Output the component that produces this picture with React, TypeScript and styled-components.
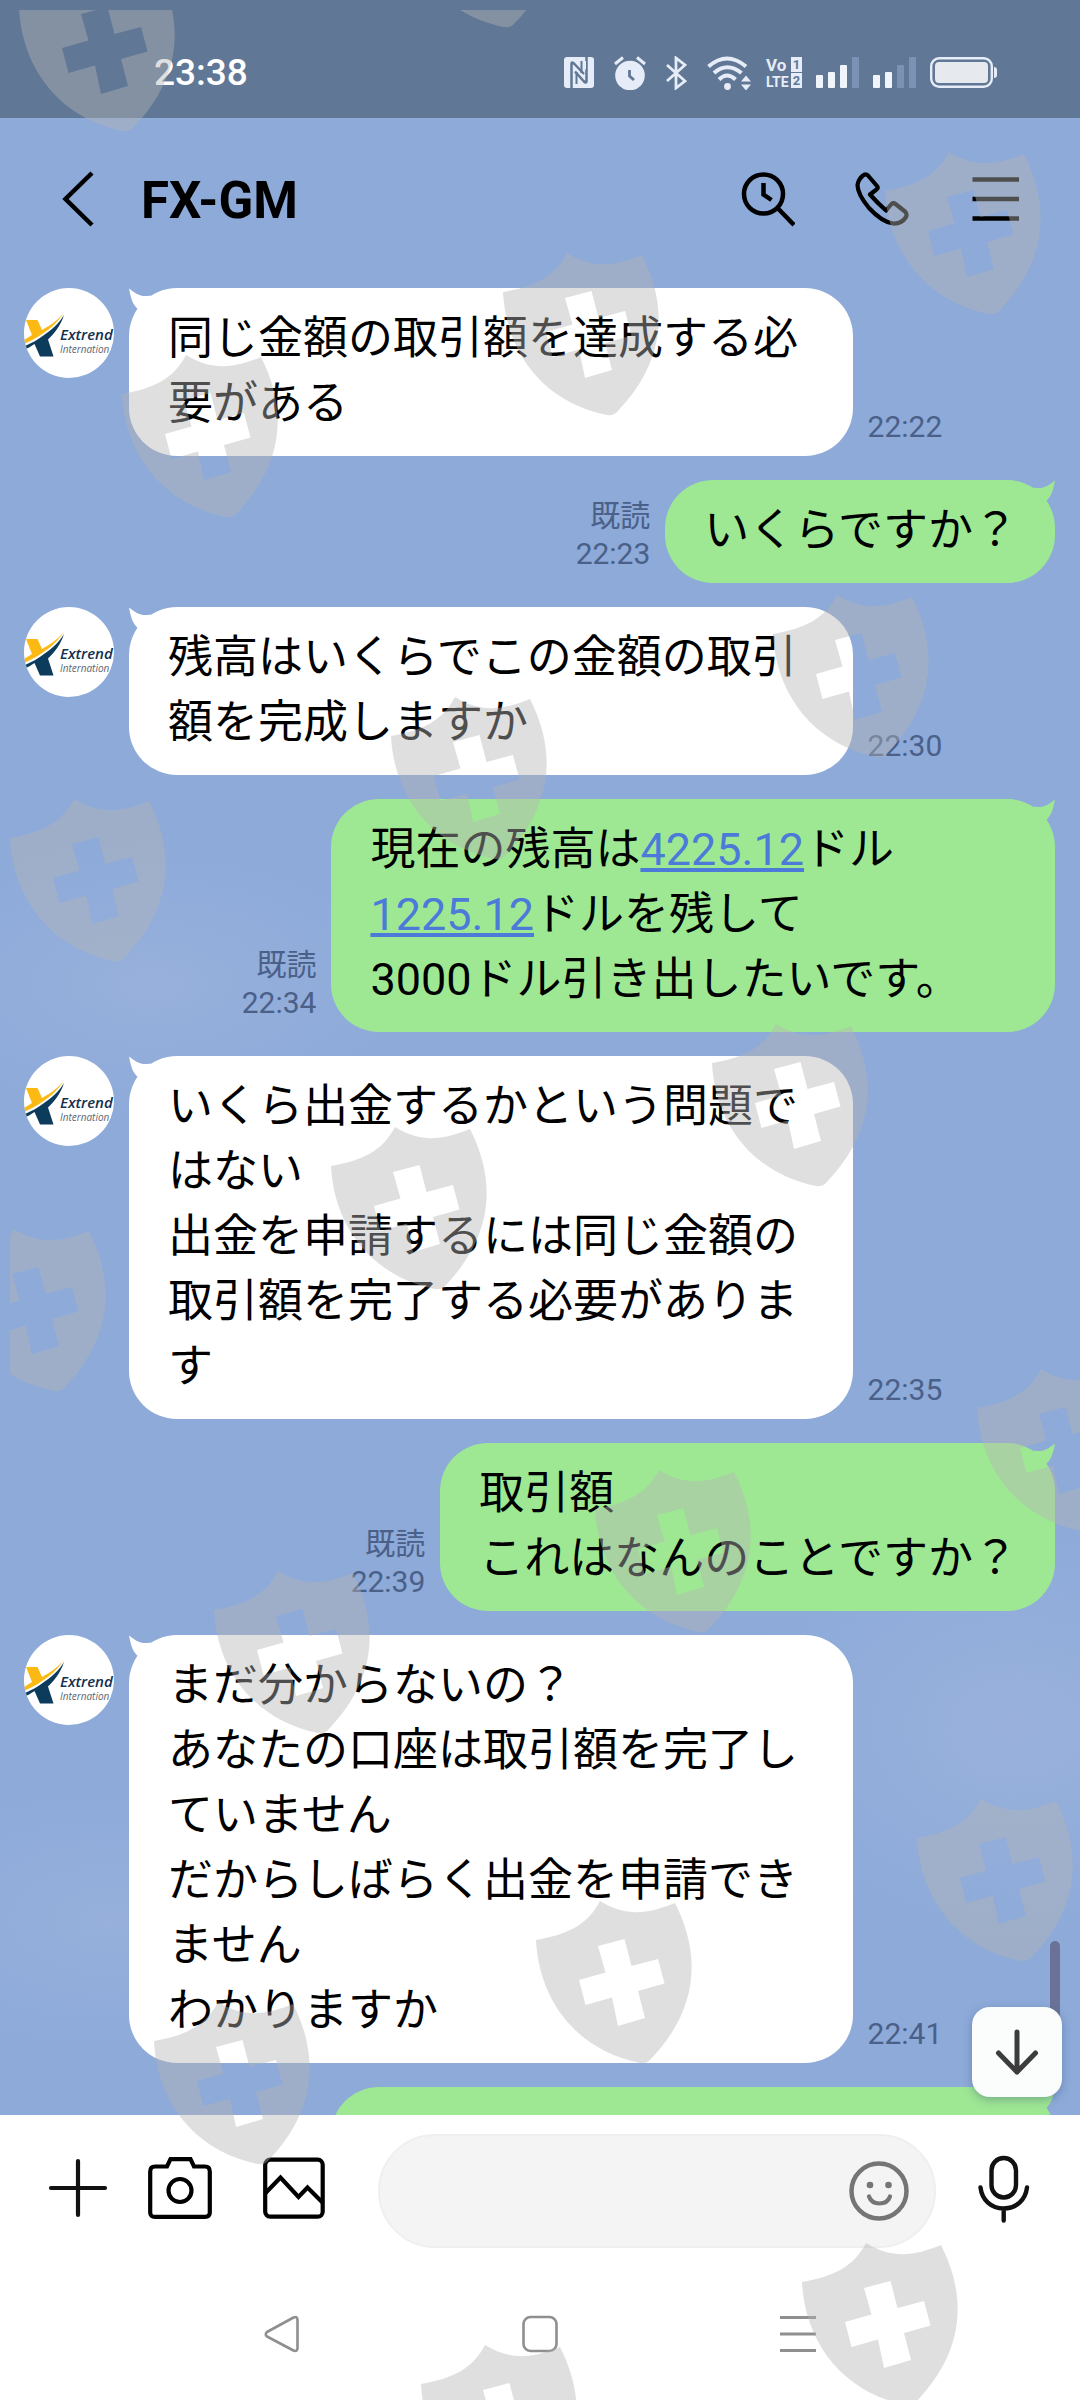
import React from "react";
import styled, { createGlobalStyle, css } from "styled-components";

const SKY = "#8daad9";
const STATUS = "#607795";
const WHITE = "#ffffff";
const GREEN = "#9ee894";
const META = "#4a6088";
const INK = "#000000";

const GlobalStyle = createGlobalStyle`
  *, *::before, *::after { box-sizing: border-box; }
  body {
    margin: 0;
    font-family: Roboto, "Noto Sans CJK JP", sans-serif;
    color: ${INK};
    background: ${WHITE};
  }
  button { border: 0; padding: 0; background: none; color: inherit; cursor: pointer; }
  h1, p { margin: 0; }
  svg { display: block; }
`;

const Screen = styled.div`
  position: relative;
  display: flex;
  flex-direction: column;
  height: 100vh;
  overflow: hidden;
  background:
    radial-gradient(ellipse 26% 6% at 14% 41%, rgba(158, 180, 221, 0.6), transparent),
    radial-gradient(ellipse 26% 9% at 94% 72%, rgba(158, 180, 221, 0.7), transparent),
    radial-gradient(ellipse 24% 6% at 10% 80%, rgba(158, 180, 221, 0.55), transparent),
    ${SKY};
`;

const StatusBar = styled.div`
  flex: none;
  display: flex;
  align-items: center;
  justify-content: space-between;
  height: 118px;
  padding: 27px 83px 0 154px;
  background: ${STATUS};
  color: ${WHITE};
`;

const Clock = styled.time`
  font-size: 37px;
  line-height: 44px;
  font-weight: 500;
`;

const StatusIcons = styled.div`
  display: flex;
  align-items: center;
  gap: 14px;
  color: #e6edf8;
`;

const IconGroup = styled.div<{ $gap: number }>`
  display: flex;
  align-items: center;
  gap: ${(p) => p.$gap}px;
`;

const Header = styled.header`
  flex: none;
  display: flex;
  align-items: center;
  height: 162px;
  padding: 0 57px 0 61px;
`;

const Title = styled.h1`
  flex: 1;
  margin-left: 46px;
  padding-top: 4px;
  font-size: 51px;
  line-height: 60px;
  font-weight: 700;
`;

const HeaderActions = styled.div`
  display: flex;
  gap: 60px;
`;

const IconButton = styled.button`
  flex: none;
  display: flex;
  align-items: center;
  justify-content: center;
`;

const ChatArea = styled.main`
  position: relative;
  flex: 1;
  min-height: 0;
  overflow: hidden;
`;

const MessageList = styled.div`
  display: flex;
  flex-direction: column;
  gap: 24px;
  padding: 8px 25px 0 24px;
`;

const Row = styled.div<{ $mine?: boolean }>`
  flex: none;
  display: flex;
  gap: 15px;
  flex-direction: ${(p) => (p.$mine ? "row-reverse" : "row")};
`;

const Bubble = styled.div<{ $mine?: boolean; $next?: boolean }>`
  position: relative;
  max-width: 67vw;
  padding: 18px 37px 20px 39px;
  border-radius: 48px;
  background: ${(p) => (p.$mine ? GREEN : WHITE)};
  font-size: 45px;
  line-height: 65px;
  white-space: pre-wrap;
  ${(p) =>
    p.$next &&
    css`
      width: 67vw;
      height: 168px;
    `}
`;

const Tail = styled.svg<{ $mine?: boolean }>`
  position: absolute;
  top: 0;
  ${(p) => (p.$mine ? "right: 0; transform: scaleX(-1);" : "left: 0;")}
  fill: ${(p) => (p.$mine ? GREEN : WHITE)};
`;

const Amount = styled.a`
  color: #4c7ad9;
  text-decoration: underline;
`;

const Meta = styled.div<{ $mine?: boolean }>`
  flex: none;
  align-self: flex-end;
  display: flex;
  flex-direction: column;
  align-items: ${(p) => (p.$mine ? "flex-end" : "flex-start")};
  padding-bottom: 10px;
  font-size: 30px;
  line-height: 38px;
  color: ${META};
`;

const AvatarFrame = styled.div`
  flex: none;
  width: 90px;
  height: 90px;
  border-radius: 50%;
  overflow: hidden;
  background: ${WHITE};
`;

const ScrollThumb = styled.div`
  position: absolute;
  right: 20px;
  bottom: 64px;
  width: 10px;
  height: 110px;
  border-radius: 5px;
  background: #6a7397;
`;

const JumpButton = styled(IconButton)`
  position: absolute;
  right: 18px;
  bottom: 18px;
  width: 90px;
  height: 90px;
  border-radius: 18px;
  background: #fbfdfd;
  box-shadow: 0 3px 10px rgba(50, 70, 110, 0.35);
`;

const Composer = styled.form`
  flex: none;
  display: flex;
  align-items: center;
  height: 152px;
  padding: 0 48px;
  background: ${WHITE};
`;

const Tools = styled.div`
  display: flex;
  align-items: center;
  gap: 40px;
  margin-right: 53px;
`;

const Field = styled.div`
  flex: 1;
  min-width: 0;
  display: flex;
  align-items: center;
  height: 114px;
  margin-right: 40px;
  padding: 0 25px 0 40px;
  border: 2px solid #efefef;
  border-radius: 57px;
  background: #f4f4f4;
`;

const TextBox = styled.input`
  flex: 1;
  min-width: 0;
  border: 0;
  outline: 0;
  background: transparent;
  font: inherit;
  font-size: 45px;
`;

const NavBar = styled.nav`
  flex: none;
  display: flex;
  align-items: center;
  justify-content: center;
  gap: 222px;
  height: 133px;
  background: ${WHITE};
  color: #8f8f8f;
`;

const ShieldLayer = styled.div`
  position: absolute;
  inset: 10px 0 0 10px;
  overflow: hidden;
  pointer-events: none;
`;

/* Icons */

const NfcIcon = () => (
  <svg width="30" height="31" viewBox="0 0 30 31">
    <rect width="30" height="31" rx="3" fill="currentColor" />
    <path d="M7.500 31V7q0-3 3 0L20 17" fill="none" stroke={STATUS} strokeWidth="2.500" />
    <path d="M22.500 0V24q0 3-3 0L11 14.500" fill="none" stroke={STATUS} strokeWidth="2.500" />
    <path d="M14 4l8 9v-9z" fill="currentColor" />
    <path d="M12.500 15v12" stroke={STATUS} strokeWidth="2" />
    <path d="M17.500 4v12" stroke={STATUS} strokeWidth="2" />
  </svg>
);

const AlarmIcon = () => (
  <svg width="32" height="34" viewBox="0 0 32 34">
    <circle cx="16" cy="19.500" r="14.800" fill="currentColor" />
    <path d="M1 8l8-6.500M31 8l-8-6.500" stroke="currentColor" strokeWidth="3" />
    <path d="M15.500 14v6l4.500 4" fill="none" stroke={STATUS} strokeWidth="2.800" />
  </svg>
);

const BluetoothIcon = () => (
  <svg width="21" height="34" viewBox="0 0 21 34" fill="none" stroke="currentColor" strokeWidth="2.800">
    <path d="M1 9l18 16-9 7V2l9 7L1 25" />
  </svg>
);

const WifiIcon = () => (
  <svg width="44" height="34" viewBox="0 0 44 34">
    <g fill="none" stroke="currentColor" strokeWidth="4">
      <path d="M1.500 10.500Q20 -5.500 39 10.500" />
      <path d="M7 17Q20 5.500 34.500 17" />
      <path d="M12 23.500Q20 15.500 28.500 23.500" />
    </g>
    <circle cx="20.500" cy="30.500" r="3.400" fill="currentColor" />
    <path d="M34 25.500l5-6 5 6zM34 28.500h10l-5 6z" fill="currentColor" />
  </svg>
);

const VolteIcon = () => (
  <svg
    width="37"
    height="35"
    viewBox="0 -2 37 35"
    overflow="visible"
    fontFamily="Roboto, sans-serif"
    fontWeight="700"
  >
    <text x="1" y="14" fontSize="17" fill="currentColor">Vo</text>
    <text x="1" y="30" fontSize="14" fill="currentColor">LTE</text>
    <rect x="26" y="0" width="11" height="15" fill="currentColor" />
    <rect x="26" y="16" width="11" height="15" fill="currentColor" />
    <text x="31.500" y="12" fontSize="13" textAnchor="middle" fill={STATUS}>1</text>
    <text x="31.500" y="28" fontSize="13" textAnchor="middle" fill={STATUS}>2</text>
  </svg>
);

const BARS = [
  [0, 18],
  [12, 15],
  [24, 8],
  [36, 0],
];

const SignalIcon = ({ level }: { level: number }) => (
  <svg width="43" height="31" viewBox="0 0 43 31">
    {BARS.map(([x, y], i) => (
      <rect key={x} x={x} y={y} width="7" height={31 - y} rx="1" fill={i < level ? "#f0f4fb" : "#7c92b5"} />
    ))}
  </svg>
);

const BatteryIcon = () => (
  <svg width="67" height="31" viewBox="0 0 67 31">
    <rect x="1.200" y="1.200" width="60.600" height="28.600" rx="8" fill="none" stroke="currentColor" strokeWidth="2.400" />
    <rect x="5" y="5" width="53" height="21" rx="4" fill="#e6eaee" />
    <path d="M64 10q3 0 3 3v5q0 3-3 3z" fill="currentColor" />
  </svg>
);

const BackIcon = () => (
  <svg width="34" height="56" viewBox="0 0 34 56" fill="none" stroke="currentColor" strokeWidth="4.500">
    <path d="M31 2L4.500 28l26.500 26" />
  </svg>
);

const SearchIcon = () => (
  <svg width="54" height="56" viewBox="0 0 54 56" fill="none" stroke="currentColor" strokeWidth="4.500">
    <circle cx="22.500" cy="23" r="19.500" />
    <path d="M36.500 37l16.500 17M22.500 12v11.500l8 5.500" />
  </svg>
);

const PhoneIcon = () => (
  <svg width="54" height="56" viewBox="0 0 54 56" fill="none" stroke="currentColor" strokeWidth="4.200" strokeLinejoin="round">
    <path d="M8 4.500Q10.500 2 13 4.500L22 15Q23.500 17 21.500 18.500L15 23.500Q22.500 32 31 39.500L36.500 33Q38.500 31.500 40.500 33L50 40.500Q52.500 43 51 46Q46.500 53 38 52.500Q27 51 14 37Q2.500 23 2.500 14Q3.500 8 8 4.500Z" />
  </svg>
);

const MenuIcon = () => (
  <svg width="54" height="56" viewBox="0 0 54 56" stroke="currentColor" strokeWidth="4.600">
    <path d="M3.500 8.500H50M3.500 28H50M3.500 47.500H50" />
  </svg>
);

const ArrowDownIcon = () => (
  <svg width="44" height="46" viewBox="0 0 44 46" fill="none" stroke="#3c3c3c" strokeWidth="5" strokeLinecap="round" strokeLinejoin="round">
    <path d="M22 3v40M3.500 24L22 43l18.500-19" />
  </svg>
);

const PlusIcon = () => (
  <svg width="60" height="66" viewBox="0 0 60 66" stroke="#111" strokeWidth="4.200" strokeLinecap="round">
    <path d="M30 3v54M3 30h54" />
  </svg>
);

const CameraIcon = () => (
  <svg width="75" height="68" viewBox="0 0 75 68" fill="none" stroke="currentColor" strokeWidth="4.200">
    <path d="M7 9.500H19L22.500 2.200H42.500L46 9.500H57Q61.800 9.500 61.800 14.500V55.500Q61.800 59.800 57 59.800H7Q2.200 59.800 2.200 55.500V14.500Q2.200 9.500 7 9.500Z" />
    <circle cx="32" cy="33.500" r="11.500" />
  </svg>
);

const PictureIcon = () => (
  <svg width="62" height="68" viewBox="0 0 62 68" fill="none" stroke="currentColor" strokeWidth="4.200">
    <rect x="2.200" y="2.700" width="57.500" height="57" rx="5" />
    <path d="M2.500 36L17.500 20.500 35.500 40l9-9.500L60 46" />
  </svg>
);

const SmileIcon = () => (
  <svg width="60" height="60" viewBox="0 0 60 60" fill="none" stroke="#757575" strokeWidth="4.500">
    <circle cx="30" cy="30" r="27.500" />
    <path d="M20 35.500q2.500 7 10.500 7t10.500-7" strokeLinecap="round" strokeWidth="4.200" />
    <g fill="#757575" stroke="none">
      <circle cx="21" cy="24" r="3.300" />
      <circle cx="39.500" cy="24" r="3.300" />
    </g>
  </svg>
);

const MicIcon = () => (
  <svg width="56" height="74" viewBox="0 0 56 74" fill="none" stroke="#111" strokeWidth="4.400" strokeLinecap="round">
    <rect x="15.500" y="4" width="24.500" height="39.500" rx="12.200" />
    <path d="M4.500 33.500C6 46 15 54.500 27.700 54.500S49.500 46 51 33.500M27.700 55v11.500" />
  </svg>
);

const NavBackIcon = () => (
  <svg width="36" height="38" viewBox="0 0 36 38" fill="none" stroke="currentColor" strokeWidth="2.600" strokeLinejoin="round">
    <path d="M29.500 2.500Q33.500 1 33.500 5V33Q33.500 37 29.500 35.500L3 21.500Q0.500 19.500 3 17Z" />
  </svg>
);

const NavHomeIcon = () => (
  <svg width="36" height="38" viewBox="0 0 36 38" fill="none" stroke="currentColor" strokeWidth="2.600">
    <rect x="1.500" y="2" width="33" height="34" rx="7" />
  </svg>
);

const NavRecentIcon = () => (
  <svg width="36" height="38" viewBox="0 0 36 38" stroke="currentColor" strokeWidth="3">
    <path d="M0 2.500H36M0 19H36M0 35.500H36" />
  </svg>
);

const Avatar = () => (
  <AvatarFrame>
    <svg width="90" height="90" viewBox="0 0 90 90" role="img" aria-label="Extrend International">
      <path fill="#fdb913" d="M2 32H13.500L18 42C27 37 34 32 40 24.500C33 36 20 47 0 56V52L8 47Z" />
      <path fill="#0d3b5c" d="M0 62V58.500C8 55 14 51.500 20 47C30 40 36 34 40 27C37 37 30 46 24 51.500L29.500 68.500H16L10.500 56C7 58.500 3 60.500 0 62Z" />
      <g fontFamily="'Open Sans', 'Noto Sans', sans-serif" fontStyle="italic">
        <text x="36" y="52" fontSize="15" fontWeight="600" fill="#14304f">Extrend</text>
        <text x="36" y="65" fontSize="10" fill="#5d6670">Internation</text>
      </g>
    </svg>
  </AvatarFrame>
);

const BubbleTail = ({ mine }: { mine?: boolean }) => (
  <Tail $mine={mine} width="24" height="24" viewBox="0 0 24 24" aria-hidden="true">
    <path d="M0 .5C2 10 3 16 9.500 21.500L23 23 21.500 7.500C12 9.500 7 6 0 .5Z" />
  </Tail>
);

/* Shield pattern laid over the whole screen */

const SHIELDS = [
  [19, -32], [400, -136], [885, 151], [503, 252], [122, 354],
  [773, 594], [391, 696], [10, 798], [712, 1023], [331, 1126],
  [-50, 1228], [977, 1368], [595, 1469], [214, 1570], [917, 1798],
  [536, 1900], [154, 2001], [802, 2242], [421, 2344],
];

const SHIELD_PATH =
  "M0 40C30 35 52 25 64 1C90 17 112 14 139 3C164 52 165 108 113 161Q109 164 104 163C40 150 3 100 0 40Z" +
  "M62 46L69.500 72.500 43 80 49.500 105 76 97.500 82 126 109 118 102 91 128.500 83.500 122 59 95.500 66 88.500 39Z";

const Shields = () => (
  <ShieldLayer aria-hidden="true">
    <svg width="1080" height="2400" viewBox="10 10 1080 2400">
      {SHIELDS.map(([x, y]) => (
        <path
          key={`${x},${y}`}
          d={SHIELD_PATH}
          transform={`translate(${x} ${y})`}
          fill="rgb(180, 180, 180)"
          fillOpacity="0.43"
          fillRule="evenodd"
        />
      ))}
    </svg>
  </ShieldLayer>
);

/* Messages */

type Message = { mine?: boolean; time: string; body: React.ReactNode };

const MESSAGES: Message[] = [
  { time: "22:22", body: "同じ金額の取引額を達成する必要がある" },
  { mine: true, time: "22:23", body: "いくらですか？" },
  { time: "22:30", body: "残高はいくらでこの金額の取引額を完成しますか" },
  {
    mine: true,
    time: "22:34",
    body: (
      <>
        現在の残高は<Amount href="#4225.12">4225.12</Amount>ドル
        <Amount href="#1225.12">1225.12</Amount>ドルを残して{"\n"}3000ドル引き出したいです。
      </>
    ),
  },
  {
    time: "22:35",
    body: "いくら出金するかという問題ではない\n出金を申請するには同じ金額の取引額を完了する必要があります",
  },
  { mine: true, time: "22:39", body: "取引額\nこれはなんのことですか？" },
  {
    time: "22:41",
    body: "まだ分からないの？\nあなたの口座は取引額を完了していません\nだからしばらく出金を申請できません\nわかりますか",
  },
];

const MessageRow = ({ mine, time, body }: Message) => (
  <Row $mine={mine}>
    {!mine && <Avatar />}
    <Bubble $mine={mine}>
      <BubbleTail mine={mine} />
      {body}
    </Bubble>
    <Meta $mine={mine}>
      {mine && <span>既読</span>}
      <time>{time}</time>
    </Meta>
  </Row>
);

export default function App() {
  return (
    <Screen lang="ja">
      <GlobalStyle />
      <StatusBar>
        <Clock>23:38</Clock>
        <StatusIcons>
          <IconGroup $gap={20}>
            <NfcIcon />
            <AlarmIcon />
            <BluetoothIcon />
            <WifiIcon />
          </IconGroup>
          <IconGroup $gap={14}>
            <VolteIcon />
            <SignalIcon level={3} />
            <SignalIcon level={2} />
            <BatteryIcon />
          </IconGroup>
        </StatusIcons>
      </StatusBar>
      <Header>
        <IconButton aria-label="戻る"><BackIcon /></IconButton>
        <Title>FX-GM</Title>
        <HeaderActions>
          <IconButton aria-label="検索"><SearchIcon /></IconButton>
          <IconButton aria-label="通話"><PhoneIcon /></IconButton>
          <IconButton aria-label="メニュー"><MenuIcon /></IconButton>
        </HeaderActions>
      </Header>
      <ChatArea>
        <MessageList>
          {MESSAGES.map((m) => (
            <MessageRow key={m.time} {...m} />
          ))}
          <Row $mine>
            <Bubble $mine $next>
              <BubbleTail mine />
            </Bubble>
          </Row>
        </MessageList>
        <ScrollThumb />
        <JumpButton aria-label="最新のメッセージへ"><ArrowDownIcon /></JumpButton>
      </ChatArea>
      <Composer onSubmit={(e) => e.preventDefault()}>
        <Tools>
          <IconButton type="button" aria-label="追加"><PlusIcon /></IconButton>
          <IconButton type="button" aria-label="カメラ"><CameraIcon /></IconButton>
          <IconButton type="button" aria-label="写真"><PictureIcon /></IconButton>
        </Tools>
        <Field>
          <TextBox type="text" aria-label="メッセージを入力" />
          <IconButton type="button" aria-label="スタンプ"><SmileIcon /></IconButton>
        </Field>
        <IconButton type="button" aria-label="音声"><MicIcon /></IconButton>
      </Composer>
      <NavBar>
        <IconButton aria-label="戻るキー"><NavBackIcon /></IconButton>
        <IconButton aria-label="ホーム"><NavHomeIcon /></IconButton>
        <IconButton aria-label="履歴"><NavRecentIcon /></IconButton>
      </NavBar>
      <Shields />
    </Screen>
  );
}
